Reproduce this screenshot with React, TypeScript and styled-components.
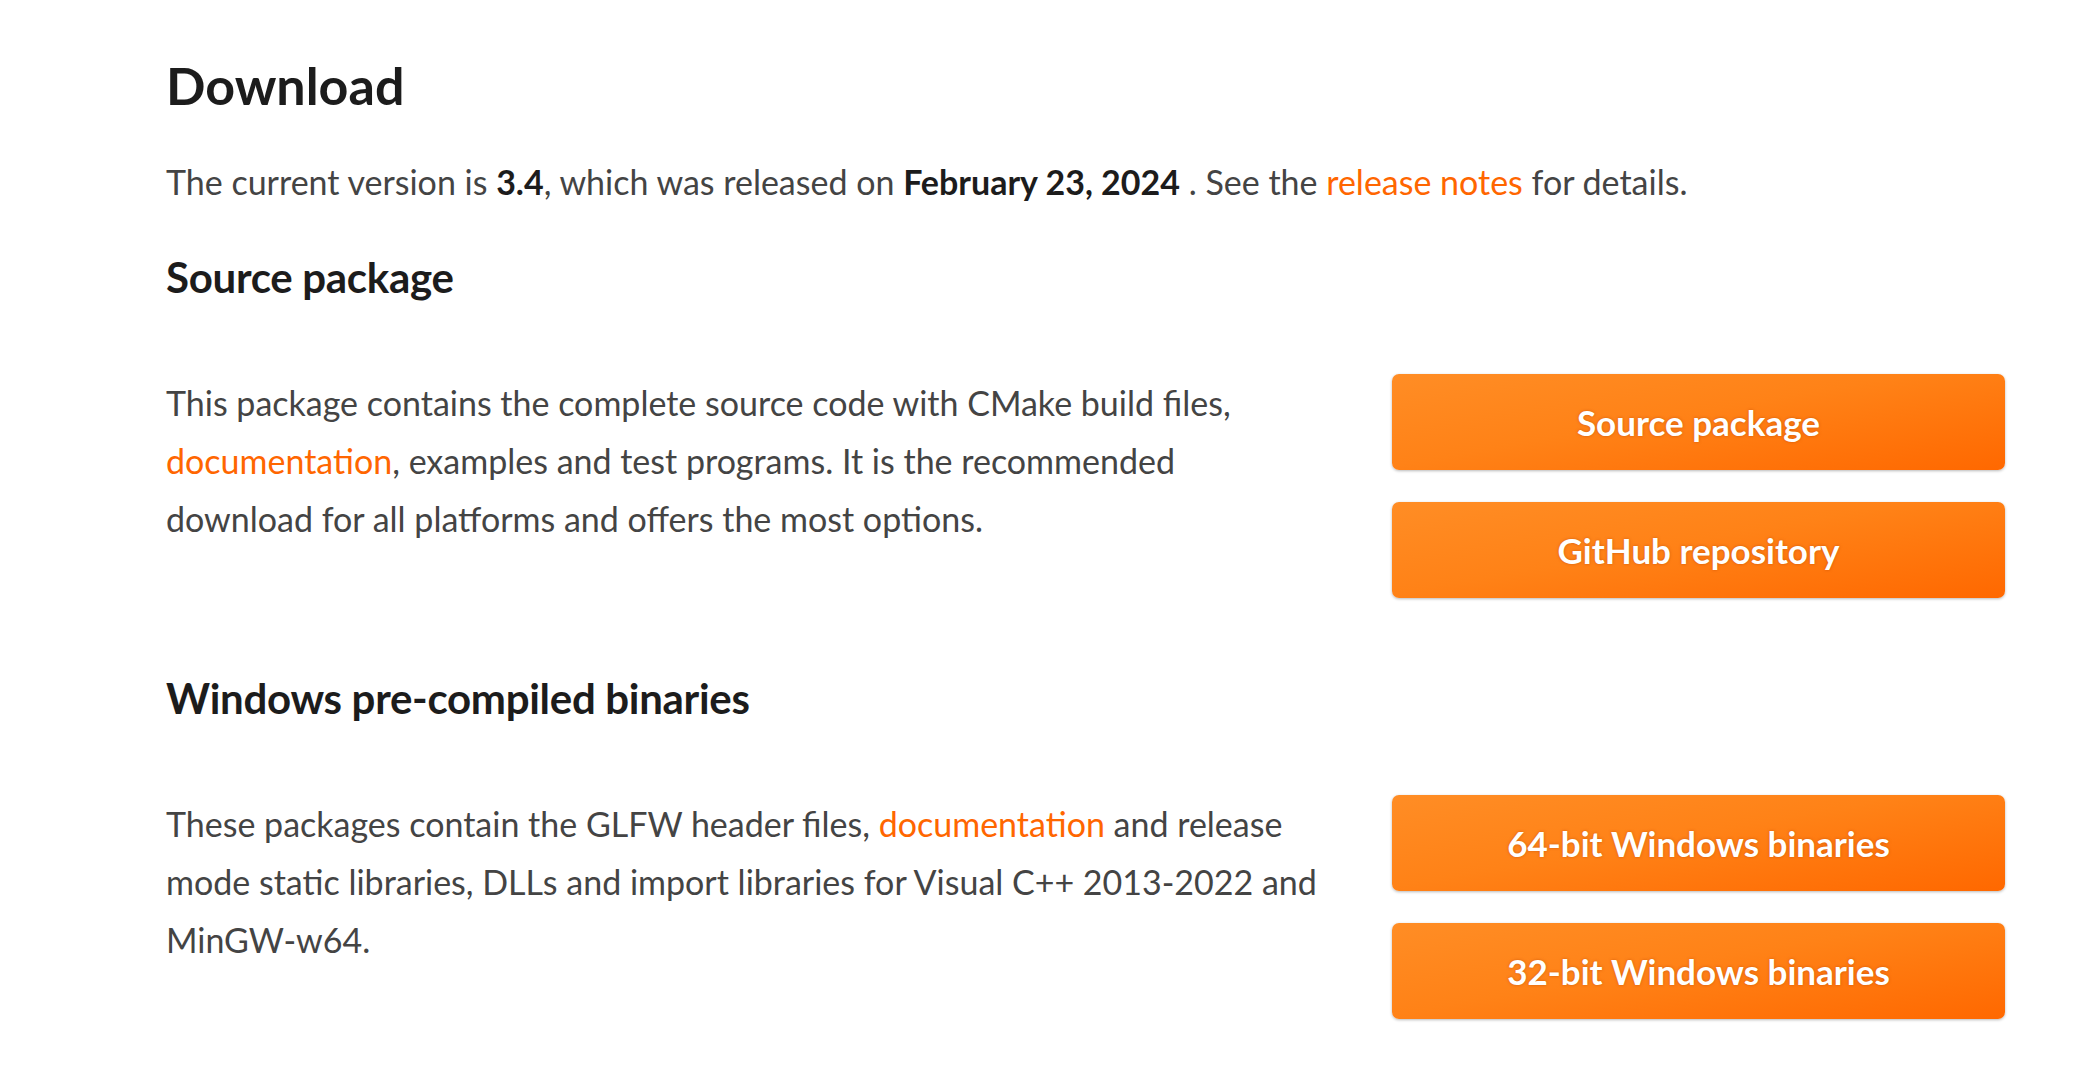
import React from "react";
import styled, { createGlobalStyle } from "styled-components";

const GlobalStyle = createGlobalStyle`
  html, body {
    margin: 0;
    padding: 0;
    background: #ffffff;
  }
  body {
    font-family: Lato, "Open Sans", "Liberation Sans", sans-serif;
    color: #444444;
  }
`;

const Page = styled.main`
  padding: 55px 84px 40px 166px;
`;

const Title = styled.h1`
  margin: 0;
  font-size: 52px;
  line-height: 60px;
  font-weight: 700;
  color: #1c1c1c;
`;

const Intro = styled.p`
  margin: 38px 0 0;
  font-size: 34px;
  line-height: 58px;
`;

const Strong = styled.strong`
  font-weight: 700;
  color: #1c1c1c;
`;

const Link = styled.a`
  color: #ff6600;
  text-decoration: none;
`;

const Section = styled.section<{ $top: number }>`
  margin-top: ${(p) => p.$top}px;
`;

const SectionTitle = styled.h2`
  margin: 0;
  font-size: 42px;
  line-height: 44px;
  font-weight: 700;
  color: #1c1c1c;
  letter-spacing: -0.3px;
`;

const Row = styled.div`
  margin-top: 75px;
  display: grid;
  grid-template-columns: 1156px 613px;
  justify-content: space-between;
  align-items: start;
`;

const Text = styled.p`
  margin: 0;
  font-size: 34px;
  line-height: 58px;
`;

const Buttons = styled.div`
  display: flex;
  flex-direction: column;
  gap: 32px;
`;

const Button = styled.a`
  display: flex;
  align-items: center;
  justify-content: center;
  height: 96px;
  border-radius: 7px;
  background: linear-gradient(170deg, #ff8d25 0%, #ff8217 45%, #ff6800 100%);
  box-shadow: 0 1px 3px rgba(0, 0, 0, 0.28);
  color: #ffffff;
  font-size: 35px;
  font-weight: 700;
  text-decoration: none;
  text-shadow: 0 0 3px rgba(170, 60, 0, 0.55);
`;

export default function App() {
  return (
    <>
      <GlobalStyle />
      <Page>
        <Title>Download</Title>
        <Intro>
          The current version is <Strong>3.4</Strong>, which was released on{" "}
          <Strong>February 23, 2024</Strong> . See the{" "}
          <Link href="#">release notes</Link> for details.
        </Intro>

        <Section $top={44}>
          <SectionTitle>Source package</SectionTitle>
          <Row>
            <Text>
              This package contains the complete source code with CMake build files,{" "}
              <Link href="#">documentation</Link>, examples and test programs. It is the
              recommended download for all platforms and offers the most options.
            </Text>
            <Buttons>
              <Button href="#">Source package</Button>
              <Button href="#">GitHub repository</Button>
            </Buttons>
          </Row>
        </Section>

        <Section $top={78}>
          <SectionTitle>Windows pre-compiled binaries</SectionTitle>
          <Row>
            <Text>
              These packages contain the GLFW header files,{" "}
              <Link href="#">documentation</Link> and release mode static libraries, DLLs
              and import libraries for Visual C++ 2013-2022 and MinGW-w64.
            </Text>
            <Buttons>
              <Button href="#">64-bit Windows binaries</Button>
              <Button href="#">32-bit Windows binaries</Button>
            </Buttons>
          </Row>
        </Section>
      </Page>
    </>
  );
}
